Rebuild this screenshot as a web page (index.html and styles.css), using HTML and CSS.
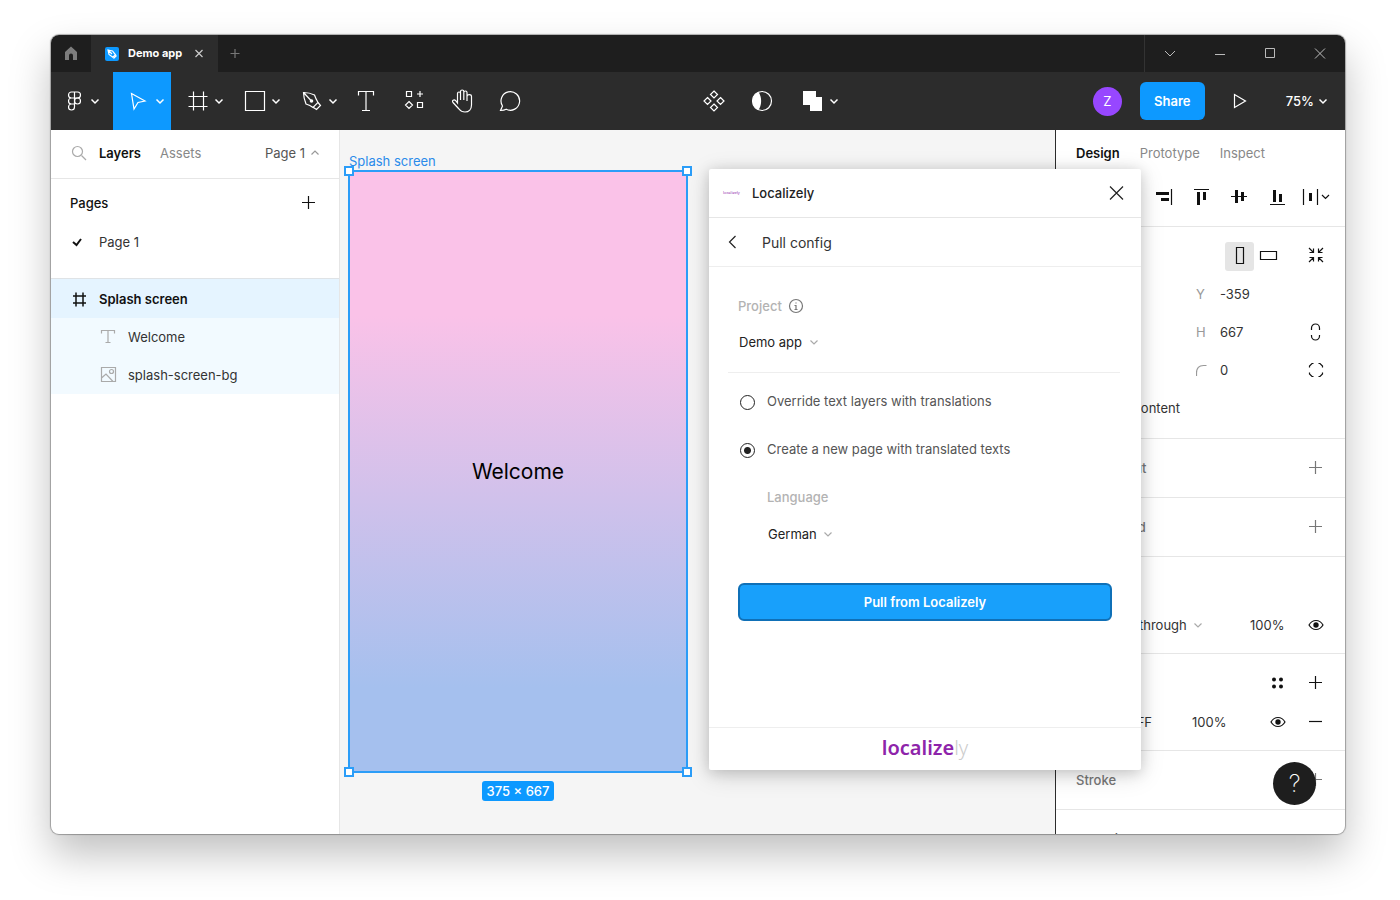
FILE: index.html
```html
<!DOCTYPE html>
<html lang="en">
<head>
<meta charset="UTF-8">
<meta name="viewport" content="width=device-width, initial-scale=1">
<title>Demo app</title>
<link rel="stylesheet" href="styles.css">
</head>
<body>
<svg class="sprite" aria-hidden="true">
<symbol id="chevron" viewBox="0 0 12 12"><path d="M2.500 4.500 6 8l3.500-3.500"/></symbol>
<symbol id="plus" viewBox="0 0 24 24"><path d="M5 11.500h13M11.500 5v13"/></symbol>
<symbol id="hash" viewBox="0 0 24 24"><path d="M7.500 2.500v19M17.500 2.500v19M2.500 7.500h19M2.500 17.500h19"/></symbol>
<symbol id="letter" viewBox="0 0 24 24"><path d="M4.500 6.500V2.500h15v4M12 2.500v19M8 21.500h8"/></symbol>
<symbol id="eye" viewBox="0 0 24 24"><path d="M5 12c3.500-6 10.500-6 14 0-3.500 6-10.500 6-14 0z"/><circle class="solid" cx="12" cy="12" r="2.700"/></symbol>
</svg>
<div class="window">
<div class="titlebar">
<button class="home" aria-label="Home"><svg class="icon" viewBox="0 0 24 24"><path class="solid" d="M6 10 12 4.500l6 5.500V18h-4v-4.500a2 2 0 0 0-4 0V18H6z"/></svg></button>
<div class="filetab">
<svg class="fileicon" viewBox="0 0 14 14"><rect width="14" height="14" rx="2"/><path d="M3 3l4.500 1 3 3.800-2.700 2.500L4 7.500zM3 3l4 4M8.500 11.500l3-3"/></svg>
<span>Demo app</span>
<button class="tabclose" aria-label="Close tab"><svg class="icon12" viewBox="0 0 12 12"><path d="M2.500 2l7 7M9.500 2l-7 7"/></svg></button>
</div>
<button class="newtab" aria-label="New tab"><svg class="icon12" viewBox="0 0 12 12"><path d="M1.500 5.500h9M6 1v9"/></svg></button>
<div class="winbuttons">
<button aria-label="Tabs"><svg class="icon12" viewBox="0 0 12 12"><path d="M1 3l5 5 5-5"/></svg></button>
<button aria-label="Minimize"><svg class="icon12" viewBox="0 0 12 12"><path d="M1 6.500h10"/></svg></button>
<button aria-label="Maximize"><svg class="icon12" viewBox="0 0 12 12"><path d="M1.500 .5h9v9h-9z"/></svg></button>
<button aria-label="Close"><svg class="icon12" viewBox="0 0 12 12"><path d="M1 .5l10 10M11 .5l-10 10"/></svg></button>
</div>
</div>

<div class="toolbar">
<div class="tools">
<button class="tool menu" aria-label="Main menu"><svg class="icon" viewBox="0 0 24 24"><path d="M11.500 3h-3a3 3 0 0 0 0 6h3zM11.500 3h3a3 3 0 0 1 0 6h-3zM11.500 9h-3a3 3 0 0 0 0 6h3zM11.500 15h-3a3 3 0 1 0 3 3z"/><circle cx="14.500" cy="12" r="3"/></svg><svg class="icon12"><use href="#chevron"/></svg></button>
<button class="tool drop active" aria-label="Move"><svg class="icon" viewBox="0 0 24 24"><path d="M4.500 4.500l13.500 7.500-7 1.500-4 6.500z"/></svg><svg class="icon12"><use href="#chevron"/></svg></button>
<button class="tool drop" aria-label="Frame"><svg class="icon"><use href="#hash"/></svg><svg class="icon12"><use href="#chevron"/></svg></button>
<button class="tool drop" aria-label="Rectangle"><svg class="icon" viewBox="0 0 24 24"><path d="M2.500 2.500h19v19h-19z"/></svg><svg class="icon12"><use href="#chevron"/></svg></button>
<button class="tool drop" aria-label="Pen"><svg class="icon" viewBox="0 0 24 24"><path d="M3.500 3.500c5 0 8 1 11 2.500 1 3 2 5 3.500 7.500l-5 5c-2-1.500-4-2.500-7-3.500-1.500-4-2.500-7-2.500-11.500zM3.500 3.500l7.500 8M18 13.500l2.500 3-4 4-3-2"/><circle class="solid" cx="11.500" cy="12" r="1.800"/></svg><svg class="icon12"><use href="#chevron"/></svg></button>
<button class="tool" aria-label="Text"><svg class="icon"><use href="#letter"/></svg></button>
<button class="tool" aria-label="Resources"><svg class="icon" viewBox="0 0 24 24"><path d="M4.500 2.500h5v5h-5zM15.500 13.500h5v5h-5zM7 12.500l3.500 3.500L7 19.500 3.500 16zM15 5h6M18 2v6"/></svg></button>
<button class="tool" aria-label="Hand"><svg class="icon" viewBox="0 0 24 24"><path d="M7.500 14V4.500c0-2 3-2 3 0V11 2.500c0-2 3.300-2 3.300 0V11 3.500c0-2 3.200-2 3.200 0V12 7.500c0-2.500 4.500-2.500 4.500 0V16c0 4-2.500 7-6.500 7-3 0-4.500-1-6-3l-6-6.500c-1.500-2 1-3.500 2.500-2z"/></svg></button>
<button class="tool" aria-label="Comment"><svg class="icon" viewBox="0 0 24 24"><path d="M2.500 21.500l2-4.500a9.300 9.300 0 1 1 3.700 3.300c-1.500.9-3.700 1.200-5.700 1.200z"/></svg></button>
</div>
<div class="tools edit">
<button class="tool" aria-label="Create component"><svg class="icon" viewBox="0 0 24 24"><path d="M12 2l3.500 3.500L12 9 8.500 5.500zM12 15l3.500 3.500L12 22l-3.500-3.500zM5.500 8.500L9 12l-3.500 3.500L2 12zM18.500 8.500L22 12l-3.500 3.500L15 12z"/></svg></button>
<button class="tool" aria-label="Use as mask"><svg class="icon" viewBox="0 0 24 24"><circle cx="12" cy="12" r="9.500"/><path class="solid" d="M8.500 3C.5 6.500.5 17.500 8.500 21c3.500-5 3.500-13 0-18z"/></svg></button>
<button class="tool drop" aria-label="Union"><svg class="icon" viewBox="0 0 24 24"><path class="solid" d="M2 2h13v6h6v14H9v-6H2z"/></svg><svg class="icon12"><use href="#chevron"/></svg></button>
</div>
<div class="session">
<span class="avatar">Z</span>
<button class="share">Share</button>
<button class="tool play" aria-label="Present"><svg class="icon" viewBox="0 0 24 24"><path d="M6.500 5.500v13l11-6.500z"/></svg></button>
<button class="zoomlevel">75%<svg class="icon12"><use href="#chevron"/></svg></button>
</div>
</div>

<div class="workspace">
<aside class="left">
<div class="lefttabs">
<svg class="icon grey" viewBox="0 0 24 24"><circle cx="10.500" cy="10.500" r="5"/><path d="M14.500 14.500l4.500 4.500"/></svg>
<button class="tab on">Layers</button>
<button class="tab">Assets</button>
<button class="pagepick">Page 1<svg class="icon12 up"><use href="#chevron"/></svg></button>
</div>
<div class="pages">
<div class="pagehead"><h2>Pages</h2><button aria-label="Add page"><svg class="icon"><use href="#plus"/></svg></button></div>
<div class="row"><svg class="icon check" viewBox="0 0 24 24"><path d="M6 12l3.500 3 4.500-6"/></svg>Page 1</div>
</div>
<div class="row parent"><svg class="icon small" viewBox="0 0 24 24"><path d="M9 5.500v14M16 5.500v14M6 9h13M6 16h13"/></svg>Splash screen</div>
<div class="row child"><svg class="icon grey" viewBox="0 0 24 24"><path d="M5.500 8.500v-3h13v3M12 5.500v12M9.500 17.500h5"/></svg>Welcome</div>
<div class="row child"><svg class="icon grey" viewBox="0 0 24 24"><path d="M5.500 4.500h14v14h-14zM5.500 15l4.500-4 7 7.500"/><circle cx="15.500" cy="8.500" r="2"/></svg>splash-screen-bg</div>
</aside>

<main class="canvas">
<div class="frame">
<span class="framename">Splash screen</span>
<span class="welcome">Welcome</span>
<i class="handle tl"></i><i class="handle tr"></i><i class="handle bl"></i><i class="handle br"></i>
<span class="size">375 × 667</span>
</div>
</main>

<aside class="right">
<div class="righttabs"><button class="tab on">Design</button><button class="tab">Prototype</button><button class="tab">Inspect</button></div>
<div class="align">
<button aria-label="Align right"><svg class="icon" viewBox="0 0 24 24"><path class="bold" d="M4 8.500h13M9 14.500h8"/><path d="M19.500 4v16"/></svg></button>
<button aria-label="Align top"><svg class="icon" viewBox="0 0 24 24"><path class="bold" d="M8.500 7v13M14.500 7v8"/><path d="M4 4.500h15"/></svg></button>
<button aria-label="Align vertical centers"><svg class="icon" viewBox="0 0 24 24"><path class="bold" d="M8.500 5v13M14.500 7v9"/><path d="M3 11.500h16"/></svg></button>
<button aria-label="Align bottom"><svg class="icon" viewBox="0 0 24 24"><path class="bold" d="M8.500 5v12M14.500 9v8"/><path d="M4 19.500h15"/></svg></button>
<button aria-label="Distribute"><svg class="icon spread" viewBox="0 0 28 24"><path d="M1.500 4v16M15.500 4v16"/><path class="bold" d="M8.500 8v8"/><path d="M20 10l3.500 3.500 3.500-3.500"/></svg></button>
</div>
<section class="props">
<div class="prop orient">
<button class="on" aria-label="Portrait"><svg class="icon" viewBox="0 0 24 24"><path d="M8.500 3.500h7v16h-7z"/></svg></button>
<button aria-label="Landscape"><svg class="icon" viewBox="0 0 24 24"><path d="M3.500 7.500h16v8h-16z"/></svg></button>
<button class="act" aria-label="Resize to fit"><svg class="icon" viewBox="0 0 24 24"><path d="M5 4l4.500 4.500M5.500 8.500h4v-4M19 4l-4.500 4.500M14.500 4.500v4h4M5 18l4.500-4.500M5.500 13.500h4v4M19 18l-4.500-4.500M18.500 13.500h-4v4"/></svg></button>
</div>
<div class="prop"><label for="y">Y</label><input id="y" value="-359"></div>
<div class="prop"><label for="h">H</label><input id="h" value="667"><button aria-label="Constrain proportions"><svg class="icon" viewBox="0 0 24 24"><path d="M7.500 10V8a4 4 0 0 1 8 0v2M7.500 15v1a4 4 0 0 0 8 0v-1"/></svg></button></div>
<div class="prop"><label for="radius" aria-label="Corner radius"><svg class="icon12" viewBox="0 0 12 12"><path d="M.5 12V9c0-5 2.500-7.500 7-7.500h3"/></svg></label><input id="radius" value="0"><button aria-label="Independent corners"><svg class="icon" viewBox="0 0 24 24"><path d="M5.500 9.500V8l2.500-2.500h1.500M14.500 5.500H16L18.500 8v1.500M18.500 14.500V16L16 18.500h-1.500M9.500 18.500H8L5.500 16v-1.500"/></svg></button></div>
<label class="clip"><input type="checkbox" checked>Clip content</label>
</section>
<section class="single"><h3>Auto layout</h3><button aria-label="Add auto layout"><svg class="icon dim"><use href="#plus"/></svg></button></section>
<section class="single"><h3>Layout grid</h3><button aria-label="Add layout grid"><svg class="icon dim"><use href="#plus"/></svg></button></section>
<section>
<div class="head"><h3 class="dark">Layer</h3></div>
<div class="blend">
<span class="pick"><select aria-label="Blend mode"><option>Pass through</option></select><svg class="icon12 grey"><use href="#chevron"/></svg></span>
<input aria-label="Layer opacity" value="100%">
<button aria-label="Hide layer"><svg class="icon"><use href="#eye"/></svg></button>
</div>
</section>
<section>
<div class="head"><h3 class="dark">Fill</h3><button aria-label="Styles"><svg class="icon" viewBox="0 0 24 24"><g class="solid"><circle cx="8" cy="8.500" r="2"/><circle cx="15" cy="8.500" r="2"/><circle cx="8" cy="15.500" r="2"/><circle cx="15" cy="15.500" r="2"/></g></svg></button><button aria-label="Add fill"><svg class="icon"><use href="#plus"/></svg></button></div>
<div class="fill">
<input aria-label="Fill color" value="FFFFFF">
<input aria-label="Fill opacity" value="100%">
<button aria-label="Hide fill"><svg class="icon"><use href="#eye"/></svg></button>
<button aria-label="Remove fill"><svg class="icon" viewBox="0 0 24 24"><path d="M5 11.500h13"/></svg></button>
</div>
</section>
<section class="single"><h3>Stroke</h3><button aria-label="Add stroke"><svg class="icon dim"><use href="#plus"/></svg></button></section>
<section class="single"><h3 class="dark">Selection colors</h3></section>
</aside>

<div class="plugin" role="dialog" aria-label="Localizely">
<div class="plughead"><span class="tinylogo">localizely</span><h2>Localizely</h2><button aria-label="Close plugin"><svg class="icon" viewBox="0 0 24 24"><path d="M6 5.500l13 13M19 5.500l-13 13"/></svg></button></div>
<div class="plugnav"><button aria-label="Back"><svg class="icon" viewBox="0 0 24 24"><path d="M14.500 5l-6 6 6 6"/></svg></button><h3>Pull config</h3></div>
<form class="plugbody" onsubmit="return false;">
<div class="project">
<label class="caption" for="project">Project<svg class="info" viewBox="0 0 16 16"><circle cx="8" cy="8" r="6.500"/><path d="M6.500 7.500H8v4M6.500 11.500h3M8 4.500v1"/></svg></label>
<span class="pick"><select id="project"><option>Demo app</option></select><svg class="icon12 grey"><use href="#chevron"/></svg></span>
</div>
<div class="modes">
<label><input type="radio" name="mode">Override text layers with translations</label>
<label><input type="radio" name="mode" checked>Create a new page with translated texts</label>
<div class="language">
<label class="caption" for="language">Language</label>
<span class="pick"><select id="language"><option>German</option></select><svg class="icon12 grey"><use href="#chevron"/></svg></span>
</div>
<button class="pull">Pull from Localizely</button>
</div>
</form>
<div class="plugfoot">localize<span>ly</span></div>
</div>
<button class="help" aria-label="Help">?</button>
</div>
</div>
</body>
</html>
```
FILE: styles.css
```css
* {
	box-sizing: border-box;
}
body {
	display: flex;
	height: 100vh;
	min-height: 700px;
	margin: 0;
	padding: 35px 55px 66px 51px;
	background: #fff;
	color: #333;
	font: 13px/20px Inter, "Liberation Sans", sans-serif;
}
button, input, select {
	margin: 0;
	padding: 0;
	border: 0;
	background: none;
	color: inherit;
	font: inherit;
}
button {
	display: flex;
	align-items: center;
	justify-content: center;
	flex: none;
}
h2, h3 {
	margin: 0;
	font-size: 13px;
	font-weight: 500;
}
svg {
	display: block;
	flex: none;
	fill: none;
	stroke: currentColor;
	stroke-width: 1.2;
}
.sprite {
	position: absolute;
	width: 0;
	height: 0;
}
.icon {
	width: 24px;
	height: 24px;
}
.icon12 {
	width: 12px;
	height: 12px;
}
.solid {
	fill: currentColor;
	stroke: none;
}
.bold {
	stroke-width: 3;
}
.grey {
	color: #aaa;
}
.dim {
	color: #777;
}
.window {
	display: flex;
	flex-direction: column;
	flex: 1;
	min-width: 0;
	overflow: hidden;
	border-radius: 8px;
	background: #fff;
	box-shadow: 0 0 1px 1px rgba(0, 0, 0, 0.3), 0 20px 40px rgba(0, 0, 0, 0.25);
}

/* title bar */
.titlebar {
	display: flex;
	flex: none;
	height: 37px;
	background: #1e1e1e;
	color: #fff;
}
.home {
	width: 41px;
	border-right: 1px solid #2c2c2c;
	color: #7d7d7d;
}
.filetab {
	display: flex;
	align-items: center;
	gap: 9px;
	padding: 0 13px;
	background: #2c2c2c;
	font-size: 11px;
	font-weight: 700;
}
.filetab span {
	padding-bottom: 1px;
}
.fileicon {
	width: 14px;
	height: 14px;
	stroke: #fff;
}
.fileicon rect {
	fill: #0d99ff;
	stroke: none;
}
.tabclose {
	margin-left: 2px;
	color: #ccc;
	stroke-width: 2;
}
.newtab {
	width: 34px;
	color: #777;
}
.winbuttons {
	display: flex;
	margin-left: auto;
	border-left: 1px solid #333;
	color: #bbb;
}
.winbuttons button {
	width: 50px;
}
.winbuttons svg {
	stroke-width: 1;
}

/* toolbar */
.toolbar {
	display: flex;
	align-items: center;
	flex: none;
	height: 58px;
	background: #2c2c2c;
	color: #fff;
}
.toolbar .icon12 {
	stroke-width: 1.5;
}
.tools {
	display: flex;
}
.tool {
	width: 48px;
	height: 58px;
}
.tool.drop {
	gap: 3px;
	width: 57px;
	padding-left: 11px;
}
.tool.menu {
	gap: 2px;
	width: 62px;
}
.tool.active {
	width: 58px;
	padding-left: 9px;
	background: #0d99ff;
}
.edit {
	margin-left: 156px;
}
.session {
	display: flex;
	align-items: center;
	margin-left: auto;
	padding-right: 16px;
}
.avatar {
	width: 29px;
	height: 29px;
	margin-right: 18px;
	border-radius: 50%;
	background: #9747ff;
	line-height: 29px;
	text-align: center;
}
.share {
	width: 65px;
	height: 38px;
	margin-right: 11px;
	border-radius: 6px;
	background: #0d99ff;
	font-weight: 600;
}
.zoomlevel {
	gap: 3px;
	margin-left: 22px;
	font-weight: 500;
}

.workspace {
	position: relative;
	display: flex;
	flex: 1;
	min-height: 0;
}

/* layers panel */
.left {
	flex: none;
	width: 289px;
	border-right: 1px solid #e6e6e6;
}
.lefttabs {
	display: flex;
	align-items: center;
	height: 49px;
	padding: 0 18px 2px 16px;
	border-bottom: 1px solid #e6e6e6;
}
.tab {
	color: #888;
}
.tab.on {
	color: #111;
	font-weight: 600;
}
.lefttabs .tab {
	margin-left: 8px;
	margin-right: 11px;
}
.pagepick {
	gap: 4px;
	margin-left: auto;
	color: #555;
}
.up {
	transform: rotate(180deg);
	color: #999;
}
.pages {
	height: 100px;
	padding-top: 5px;
	border-bottom: 1px solid #dfe3e6;
}
.pagehead {
	display: flex;
	align-items: center;
	justify-content: space-between;
	height: 38px;
	padding: 0 18px 0 19px;
	color: #111;
}
.row {
	display: flex;
	align-items: center;
	gap: 8px;
	height: 39px;
	padding-left: 16px;
}
.check {
	color: #111;
	stroke-width: 2;
}
.parent {
	background: #e5f4ff;
	color: #111;
	font-weight: 600;
}
.small {
	stroke-width: 1.5;
}
.child {
	height: 38px;
	padding-left: 45px;
	background: #f2faff;
}

/* canvas */
.canvas {
	position: relative;
	flex: 1;
	min-width: 0;
	background: #f5f5f5;
}
.frame {
	position: absolute;
	top: 40px;
	left: 8px;
	display: flex;
	align-items: center;
	justify-content: center;
	width: 340px;
	height: 603px;
	border: 2px solid #2b9df8;
	background: linear-gradient(#fac2e8 24%, #a5c0ee 86%);
}
.framename {
	position: absolute;
	top: -21px;
	left: -1px;
	color: #2a8bea;
}
.welcome {
	color: #000;
	font-size: 21px;
	line-height: 28px;
}
.size {
	position: absolute;
	top: 609px;
	padding: 0 5px;
	border-radius: 3px;
	background: #0d99ff;
	color: #fff;
	font-weight: 500;
}
.handle {
	position: absolute;
	width: 10px;
	height: 10px;
	border: 2px solid #2b9df8;
	background: #fff;
}
.tl, .tr {
	top: -6px;
}
.bl, .br {
	bottom: -6px;
}
.tl, .bl {
	left: -6px;
}
.tr, .br {
	right: -6px;
}

/* design panel */
.right {
	flex: none;
	width: 290px;
	overflow: hidden;
	border-left: 1px solid #2c2c2c;
}
.righttabs {
	display: flex;
	gap: 20px;
	height: 46px;
	padding-left: 20px;
}
.align {
	display: flex;
	justify-content: flex-end;
	height: 51px;
	padding: 0 10px 9px 0;
	border-bottom: 1px solid #e6e6e6;
	color: #111;
}
.align button, .right section button {
	width: 38px;
}
.icon.spread {
	width: 28px;
}
.right section {
	padding: 9px 10px 9px 20px;
	border-bottom: 1px solid #e6e6e6;
}
.right section.props {
	padding-top: 10px;
	padding-bottom: 11px;
}
.right section button {
	color: #111;
}
.right input {
	min-width: 0;
	width: 100%;
}
.prop, .clip, .head, .blend, .fill {
	display: grid;
	align-items: center;
	height: 39px;
}
.prop, .clip {
	height: 38px;
}
.prop {
	grid-template-columns: 24px 77px 38px;
	justify-content: end;
}
.prop label {
	color: #999;
}
.prop.orient {
	display: flex;
}
.right .orient button {
	width: 29px;
	height: 29px;
	border-radius: 3px;
}
.right .orient .on {
	background: #e5e5e5;
}
.right .orient .act {
	width: 38px;
	margin-left: 14px;
}
.clip {
	grid-template-columns: 30px 1fr;
}
.right .clip input {
	width: 13px;
}
.right .single {
	display: flex;
	align-items: center;
	justify-content: space-between;
	height: 59px;
}
.right h3 {
	color: #777;
}
.right h3.dark {
	color: #222;
}
.head {
	grid-template-columns: 1fr 38px 38px;
}
.blend {
	grid-template-columns: 1fr 47px 38px;
	padding-left: 30px;
}
.fill {
	grid-template-columns: 1fr 67px 38px 38px;
	padding-left: 30px;
}
.pick {
	display: flex;
	align-items: center;
	gap: 5px;
}
select {
	appearance: none;
}

/* plugin window */
.plugin {
	position: absolute;
	top: 39px;
	right: 204px;
	display: flex;
	flex-direction: column;
	width: 432px;
	height: 601px;
	border-radius: 2px;
	background: #fff;
	box-shadow: 0 2px 14px rgba(0, 0, 0, 0.15), 0 5px 24px rgba(0, 0, 0, 0.15);
}
.plughead, .plugnav {
	display: flex;
	align-items: center;
	height: 49px;
	border-bottom: 1px solid #e6e6e6;
	color: #222;
}
.plughead {
	padding: 0 13px 0 14px;
}
.tinylogo {
	width: 29px;
	color: #8e24aa;
	font: 400 4px/6px "Noto Sans", sans-serif;
}
.plughead button {
	margin-left: auto;
}
.plugnav {
	gap: 17px;
	padding: 2px 0 0 12px;
	border-color: #eee;
}
.plugnav h3 {
	color: #333;
	font-size: 14px;
	font-weight: 400;
}
.plugbody {
	flex: 1;
	padding: 29px 21px 0 19px;
}
.caption {
	display: flex;
	align-items: center;
	gap: 6px;
	color: #b3b3b3;
	font-weight: 500;
}
.info {
	width: 16px;
	height: 16px;
	color: #777;
}
.project {
	padding: 0 10px 20px;
	border-bottom: 1px solid #eee;
}
.plugbody .pick {
	height: 20px;
	margin-top: 16px;
	padding-left: 1px;
	color: #222;
}
.modes {
	display: flex;
	flex-direction: column;
	gap: 24px;
	padding: 18px 8px 0 10px;
}
.modes > label {
	display: flex;
	gap: 12px;
	height: 24px;
	color: #555;
}
.modes input {
	width: 15px;
	height: 15px;
	margin: 4px 0 0 2px;
	appearance: none;
	border: 1px solid #222;
	border-radius: 50%;
}
.modes input:checked {
	background: radial-gradient(#222 0 3px, #fff 4px);
}
.language {
	padding-left: 29px;
}
.language .pick {
	margin-top: 17px;
}
.pull {
	height: 38px;
	margin-top: 15px;
	border: 2px solid #0f70b7;
	border-radius: 6px;
	background: #18a0fb;
	color: #fff;
	font-weight: 600;
}
.plugfoot {
	height: 43px;
	border-top: 1px solid #eee;
	color: #8e24aa;
	font: 600 20px/40px "Noto Sans", sans-serif;
	text-align: center;
}
.plugfoot span {
	color: #ccc;
	font-weight: 300;
}
.help {
	position: absolute;
	right: 29px;
	bottom: 29px;
	width: 43px;
	height: 43px;
	border-radius: 50%;
	background: #1e1e1e;
	color: #fff;
	font-size: 24px;
	font-weight: 200;
}
```
